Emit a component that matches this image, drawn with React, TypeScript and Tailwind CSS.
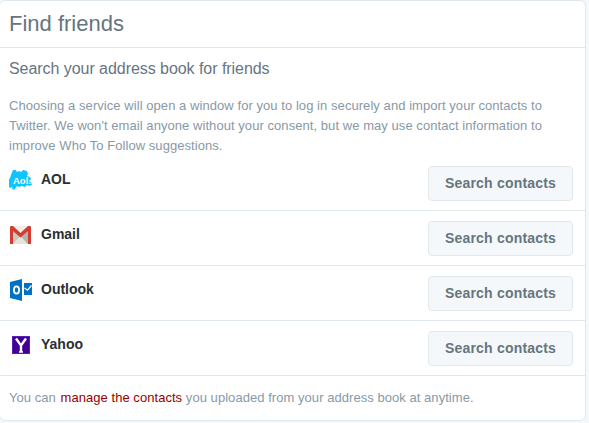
const services = [
  { name: 'AOL', icon: <AolIcon /> },
  { name: 'Gmail', icon: <GmailIcon /> },
  { name: 'Outlook', icon: <OutlookIcon /> },
  { name: 'Yahoo', icon: <YahooIcon /> },
];

function AolIcon() {
  return (
    <svg className="-mt-px" width="24" height="21" viewBox="0 0 24 21">
      <path
        d="M4 0h3l1 2 2-1 2 1 2-2 4 1 1 3-1 2 3 1 1 2-2 2 2 1 1 3-3 1-2-1-2 2-3-1-3 1-2-1-2 3-2 1-1-3-2 1-2-2 1-3-1-2 2-3 1-3z"
        fill="#10c4ff"
      />
      <text x="4" y="14" fontSize="9.500" fontWeight="700" fill="#fff" fontFamily="'Liberation Sans', sans-serif">
        Aol.
      </text>
    </svg>
  );
}

function GmailIcon() {
  return (
    <svg className="ml-px" width="21" height="18" viewBox="0 0 21 18">
      <rect x="0" y="0" width="21" height="18" fill="#c9c8bf" />
      <path d="M3 18l7.500-8 7.500 8z" fill="#e6e5dc" />
      <path d="M10.500 10L18 4v14z" fill="#b5b4aa" />
      <path d="M1 0h19l-9.500 8z" fill="#efeee6" />
      <path d="M0 18V1l1-1 2 0 7.500 7L18 0h2l1 1v17h-3V5l-7.500 6.500L3 5v13z" fill="#d63b30" />
    </svg>
  );
}

function OutlookIcon() {
  return (
    <svg className="ml-px -mt-[2px]" width="22" height="22" viewBox="0 0 22 22">
      <path d="M0 3l12-3v22L0 19z" fill="#0072c6" />
      <path d="M14 4h8v12h-8z" fill="#0072c6" />
      <path d="M14.500 9l3 2.200L21.500 6.500" fill="none" stroke="#fff" strokeWidth="1.200" />
      <ellipse cx="6.500" cy="11" rx="2.600" ry="3.600" fill="none" stroke="#fff" strokeWidth="1.800" />
    </svg>
  );
}

function YahooIcon() {
  return (
    <svg className="ml-[3px]" width="18" height="18" viewBox="0 0 18 18">
      <rect width="18" height="18" fill="#410093" />
      <rect x="0.500" y="0.500" width="17" height="17" fill="none" stroke="#5a1fb0" />
      <path d="M4 2.500L9 9.500l5-7M9 9.500V16" fill="none" stroke="#fff" strokeWidth="2.400" />
      <path d="M7 16h4" stroke="#fff" strokeWidth="1.500" />
    </svg>
  );
}

export default function App() {
  return (
    <div className="h-[423px] w-[589px] overflow-hidden bg-[#f5f8fa] font-['Liberation_Sans',sans-serif]">
      <div className="-ml-px w-[587px] rounded-md border border-[#e1e8ed] bg-white">
        <div className="flex h-[47px] items-center border-b border-[#e1e8ed] px-[9px] pb-[2px]">
          <h1 className="text-[22px] text-[#66757f]">Find friends</h1>
        </div>

        <div className="px-[9px] pt-[11px]">
          <h2 className="text-[16px] leading-[20px] tracking-[-0.05px] text-[#66757f]">
            Search your address book for friends
          </h2>
          <p className="mt-[17px] text-[13px] leading-[20px] tracking-[0.06px] text-[#8899a6]">
            Choosing a service will open a window for you to log in securely and import your contacts to Twitter. We
            won't email anyone without your consent, but we may use contact information to improve Who To Follow
            suggestions.
          </p>
        </div>

        <div>
          {services.map((s) => (
            <div key={s.name} className="flex h-[55px] border-b border-[#e1e8ed] pl-[9px] pr-[12px]">
              <div className="flex w-[32px] shrink-0 items-start pt-[15px]">{s.icon}</div>
              <div className="flex-1 pt-[13px] text-[14px] font-bold leading-[20px] text-[#292f33]">{s.name}</div>
              <button className="mt-[10px] h-[35px] w-[145px] rounded border border-[#e1e8ed] bg-[#f5f8fa] text-[14px] font-bold tracking-[0.2px] text-[#66757f]">
                Search contacts
              </button>
            </div>
          ))}
        </div>

        <div className="px-[9px] py-[13px] text-[13px] leading-[18px] tracking-[0.05px] text-[#8899a6]">
          You can <a className="ml-px text-[#990000]">manage the contacts</a> you uploaded from your address book at
          anytime.
        </div>
      </div>
    </div>
  );
}
